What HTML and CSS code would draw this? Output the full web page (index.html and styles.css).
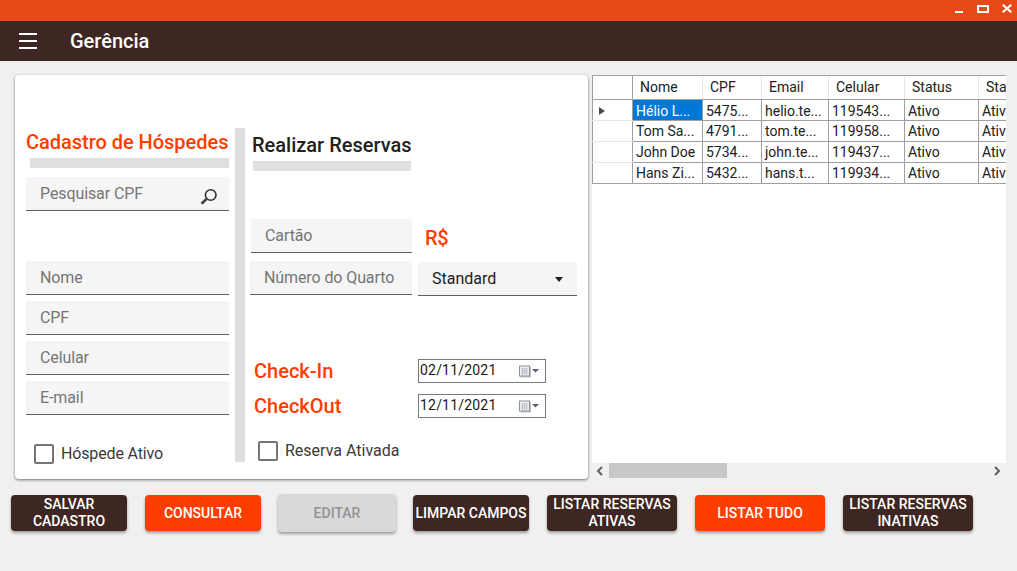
FILE: index.html
```html
<!DOCTYPE html>
<html lang="pt-BR">
<head>
<meta charset="utf-8">
<title>Gerência</title>
<link rel="stylesheet" href="styles.css">
</head>
<body>
<div class="titlebar">
  <svg class="winctl" width="64" height="21" viewBox="0 0 64 21" aria-hidden="true">
    <rect x="1" y="11" width="8" height="2" fill="#fff"/>
    <rect x="24" y="6" width="10" height="6" fill="none" stroke="#fff" stroke-width="2"/>
    <path d="M48.7 4.7l8.6 7.6M57.3 4.7l-8.6 7.6" stroke="#fff" stroke-width="2.2" fill="none"/>
  </svg>
</div>
<header class="appbar">
  <span class="burger"><i></i><i></i><i></i></span>
  <span class="apptitle">Gerência</span>
</header>
<main class="content">
  <section class="card">
    <div class="col-left">
      <h2 class="title accent">Cadastro de Hóspedes</h2>
      <div class="bar bar-left"></div>
      <div class="field search">Pesquisar CPF
        <svg class="lens" width="20" height="20" viewBox="0 0 20 20" aria-hidden="true">
          <circle cx="11.7" cy="9" r="5.3" fill="none" stroke="#333" stroke-width="1.6"/>
          <path d="M7.5 13l-5 4.8" stroke="#444" stroke-width="2.6"/>
        </svg>
      </div>
      <div class="field f-nome">Nome</div>
      <div class="field f-next">CPF</div>
      <div class="field f-next">Celular</div>
      <div class="field f-next">E-mail</div>
      <label class="check check-left"><span class="box"></span><span class="check-text">Hóspede Ativo</span></label>
    </div>
    <div class="divider"></div>
    <div class="col-right">
      <h2 class="title dark">Realizar Reservas</h2>
      <div class="bar bar-right"></div>
      <div class="pay-row">
        <div class="field f-cartao">Cartão</div>
        <span class="money accent">R$</span>
      </div>
      <div class="room-row">
        <div class="field f-quarto">Número do Quarto</div>
        <div class="field select">Standard<span class="caret"></span></div>
      </div>
      <div class="date-row first">
        <span class="date-label accent">Check-In</span>
        <div class="date">02/11/2021
          <svg class="cal" width="24" height="14" viewBox="0 0 24 14" aria-hidden="true"><use href="#calicon"/></svg>
        </div>
      </div>
      <div class="date-row second">
        <span class="date-label accent">CheckOut</span>
        <div class="date">12/11/2021
          <svg class="cal" width="24" height="14" viewBox="0 0 24 14" aria-hidden="true"><use href="#calicon"/></svg>
        </div>
      </div>
      <label class="check check-right"><span class="box"></span><span class="check-text">Reserva Ativada</span></label>
    </div>
  </section>
  <section class="gridview">
    <div class="gridclip">
      <table class="grid">
        <colgroup><col class="c0"><col class="c1"><col class="c2"><col class="c3"><col class="c4"><col class="c5"><col class="c6"></colgroup>
        <thead>
          <tr><th></th><th>Nome</th><th>CPF</th><th>Email</th><th>Celular</th><th>Status</th><th>Status</th></tr>
        </thead>
        <tbody>
          <tr class="first-row"><td class="rowhead"><span class="rowmark"></span></td><td class="sel">Hélio L...</td><td>5475...</td><td>helio.te...</td><td>119543...</td><td>Ativo</td><td>Ativo</td></tr>
          <tr><td class="rowhead"></td><td>Tom Sa...</td><td>4791...</td><td>tom.te...</td><td>119958...</td><td>Ativo</td><td>Ativo</td></tr>
          <tr><td class="rowhead"></td><td>John Doe</td><td>5734...</td><td>john.te...</td><td>119437...</td><td>Ativo</td><td>Ativo</td></tr>
          <tr><td class="rowhead"></td><td>Hans Zi...</td><td>5432...</td><td>hans.t...</td><td>119934...</td><td>Ativo</td><td>Ativo</td></tr>
        </tbody>
      </table>
    </div>
    <div class="hscroll">
      <svg width="8" height="10" viewBox="0 0 8 10" aria-hidden="true"><path d="M6 1L2 5l4 4" fill="none" stroke="#606060" stroke-width="2"/></svg>
      <div class="track"><div class="thumb"></div></div>
      <svg width="8" height="10" viewBox="0 0 8 10" aria-hidden="true"><path d="M2 1l4 4-4 4" fill="none" stroke="#606060" stroke-width="2"/></svg>
    </div>
  </section>
</main>
<footer class="actions">
  <button class="btn brown w116">SALVAR CADASTRO</button>
  <button class="btn orange w116 tight">CONSULTAR</button>
  <button class="btn off">EDITAR</button>
  <button class="btn brown w116">LIMPAR CAMPOS</button>
  <button class="btn brown w130">LISTAR RESERVAS ATIVAS</button>
  <button class="btn orange w130">LISTAR TUDO</button>
  <button class="btn brown w130">LISTAR RESERVAS INATIVAS</button>
</footer>
<svg class="defs" width="0" height="0" aria-hidden="true">
  <defs>
    <g id="calicon">
      <rect x="2.5" y="3" width="10.5" height="10.5" fill="#c4c4c4"/>
      <rect x="1.5" y="2" width="10" height="10" fill="#eef0f3" stroke="#8c8f96"/>
      <path d="M3 5h7M3 7h7M3 9h7M4.5 4v7M6.5 4v7M8.5 4v7" stroke="#b9bdc6" stroke-width=".8"/>
      <path d="M14 5h7l-3.5 3.5z" fill="#4f6080"/>
    </g>
  </defs>
</svg>
</body>
</html>
```
FILE: styles.css
```css
* { box-sizing: border-box; }
html, body { margin: 0; height: 100%; }
body {
  width: 1017px;
  height: 571px;
  overflow: hidden;
  background: #f0f0f0;
  font-family: Roboto, "Liberation Sans", sans-serif;
  color: #212121;
}
.titlebar {
  height: 21px;
  background: #e64a19;
  display: flex;
  justify-content: flex-end;
}
.winctl { display: block; margin-right: -1px; }
.appbar {
  height: 40px;
  background: #3e2723;
  display: flex;
  align-items: center;
  padding-left: 19px;
  color: #fff;
}
.burger { width: 18px; display: flex; flex-direction: column; gap: 5px; }
.burger i { display: block; height: 2px; background: #fff; }
.apptitle { margin-left: 33px; font-size: 20px; font-weight: 500; }

.content {
  height: 418px;
  padding: 14px 11px 0 15px;
  display: flex;
  align-items: flex-start;
}
.card {
  width: 573px;
  height: 404px;
  background: #fff;
  border-radius: 4px;
  box-shadow: 0 1px 3px rgba(0,0,0,.55);
  display: flex;
  padding: 53px 11px 0 11px;
}
.col-left { width: 203px; }
.divider { width: 10px; height: 334px; margin-left: 6px; background: #dfdfdf; }
.col-right { width: 332px; padding-left: 5px; }

.title { margin: 0; font-size: 20px; line-height: 24px; font-weight: 500; white-space: nowrap; }
.accent { color: #ff3d00; }
.dark { color: #212121; }
.col-left .title { padding-top: 2px; height: 30px; letter-spacing: -.03px; }
.col-right .title { padding: 5px 0 0 2px; height: 33px; }
.bar { height: 10px; background: #dfdfdf; }
.bar-left { margin-left: 4px; }
.bar-right { width: 158px; margin-left: 3px; }

.field {
  height: 34px;
  background: #f5f5f5;
  border-bottom: 1px solid #616161;
  color: #757575;
  font-size: 16px;
  line-height: 34px;
  letter-spacing: -.1px;
  padding-left: 14px;
  position: relative;
  white-space: nowrap;
}
.search { margin-top: 9px; }
.lens { position: absolute; right: 10px; top: 9px; }
.f-nome { margin-top: 50px; }
.f-next { margin-top: 6px; }
.check { display: flex; align-items: center; font-size: 16px; color: #3a3a3a; line-height: 20px; }
.check-text { padding-top: 1px; }
.check-left .check-text { letter-spacing: -.15px; }
.box {
  width: 20px;
  height: 20px;
  border: 2px solid #757575;
  border-radius: 2px;
  background: #fff;
  margin-right: 7px;
  flex: none;
}
.check-left { margin: 28px 0 0 8px; }
.check-right { margin: 22px 0 0 8px; }

.pay-row { display: flex; align-items: center; margin-top: 48px; }
.f-cartao { width: 161px; margin-left: 1px; }
.money { margin-left: 13px; font-size: 20px; font-weight: 500; padding-top: 3px; letter-spacing: -.3px; }
.room-row { display: flex; align-items: flex-start; margin-top: 8px; }
.f-quarto { width: 162px; }
.select {
  width: 159px;
  margin: 1px 0 0 6px;
  color: #212121;
  line-height: 33px;
  letter-spacing: 0;
}
.caret {
  position: absolute;
  right: 14px;
  top: 15px;
  border-left: 4.5px solid transparent;
  border-right: 4.5px solid transparent;
  border-top: 5px solid #212121;
}
.date-row { display: flex; align-items: center; }
.date-row.first { margin-top: 63px; }
.date-row.second { margin-top: 11px; }
.date-label { width: 168px; padding-left: 4px; font-size: 20px; font-weight: 500; line-height: 24px; }
.date {
  width: 128px;
  height: 24px;
  border: 1px solid #7a7a7a;
  background: #fff;
  font-size: 14px;
  line-height: 21px;
  padding-left: 1px;
  color: #1a1a1a;
  letter-spacing: .2px;
  position: relative;
}
.cal { position: absolute; left: 99px; top: 4px; }

.gridview {
  width: 414px;
  height: 403px;
  margin-left: 4px;
  background: #fff;
  display: flex;
  flex-direction: column;
}
.gridclip { height: 388px; overflow: hidden; }
.grid {
  border-collapse: collapse;
  table-layout: fixed;
  width: 460px;
  font-size: 14px;
  color: #212121;
}
.c0 { width: 40px; }
.c1 { width: 70px; }
.c2 { width: 59px; }
.c3 { width: 67px; }
.c4 { width: 76px; }
.c5 { width: 74px; }
.c6 { width: 74px; }
.grid th {
  height: 24px;
  font-weight: 400;
  text-align: left;
  padding: 0 0 2px 7px;
  border-left: 1px solid #e6e6e6;
  border-bottom: 1px solid #a0a0a0;
  border-top: 1px solid #a0a0a0;
  white-space: nowrap;
  overflow: hidden;
}
.grid th:first-child { border-left: 1px solid #a0a0a0; }
.grid th:nth-child(2) { border-left: 1px solid #a0a0a0; }
.grid td {
  height: 21px;
  padding: 0 0 0 3px;
  border: 1px solid #a0a0a0;
  border-top: 0;
  white-space: nowrap;
  overflow: hidden;
}
.grid .first-row td { padding-top: 1px; }
.grid td.rowhead { border-bottom: 1px solid #e6e6e6; position: relative; padding: 0; }
.grid tr:last-child td.rowhead { border-bottom-color: #a0a0a0; }
.rowmark {
  position: absolute;
  left: 6px;
  top: 7px;
  border-top: 4.5px solid transparent;
  border-bottom: 4.5px solid transparent;
  border-left: 6px solid #4a4a4a;
}
.grid td.sel { background: #0078d7; color: #fff; }
.hscroll {
  height: 15px;
  background: #f0f0f0;
  display: flex;
  align-items: center;
  padding: 0 5px 0 4px;
}
.track { flex: 1; height: 15px; padding-left: 5px; }
.thumb { width: 118px; height: 15px; background: #c8c8c8; }

.actions {
  display: flex;
  align-items: flex-start;
  padding: 16px 0 0 11px;
}
.btn {
  height: 36px;
  border: 0;
  border-radius: 4px;
  font-family: inherit;
  font-size: 14px;
  font-weight: 500;
  line-height: 17px;
  padding: 0;
  color: #fff;
  box-shadow: 0 2px 3px rgba(0,0,0,.35);
}
.w116 { width: 116px; margin-right: 18px; }
.w130 { width: 130px; margin-right: 18px; }
.w116.tight { margin-right: 17px; }
.brown { background: #3e2723; }
.orange { background: #ff3d00; }
.off {
  width: 118px;
  height: 38px;
  margin: -1px 17px 0 0;
  background: #d9d9d9;
  color: #939393;
}
.defs { position: absolute; }
```
